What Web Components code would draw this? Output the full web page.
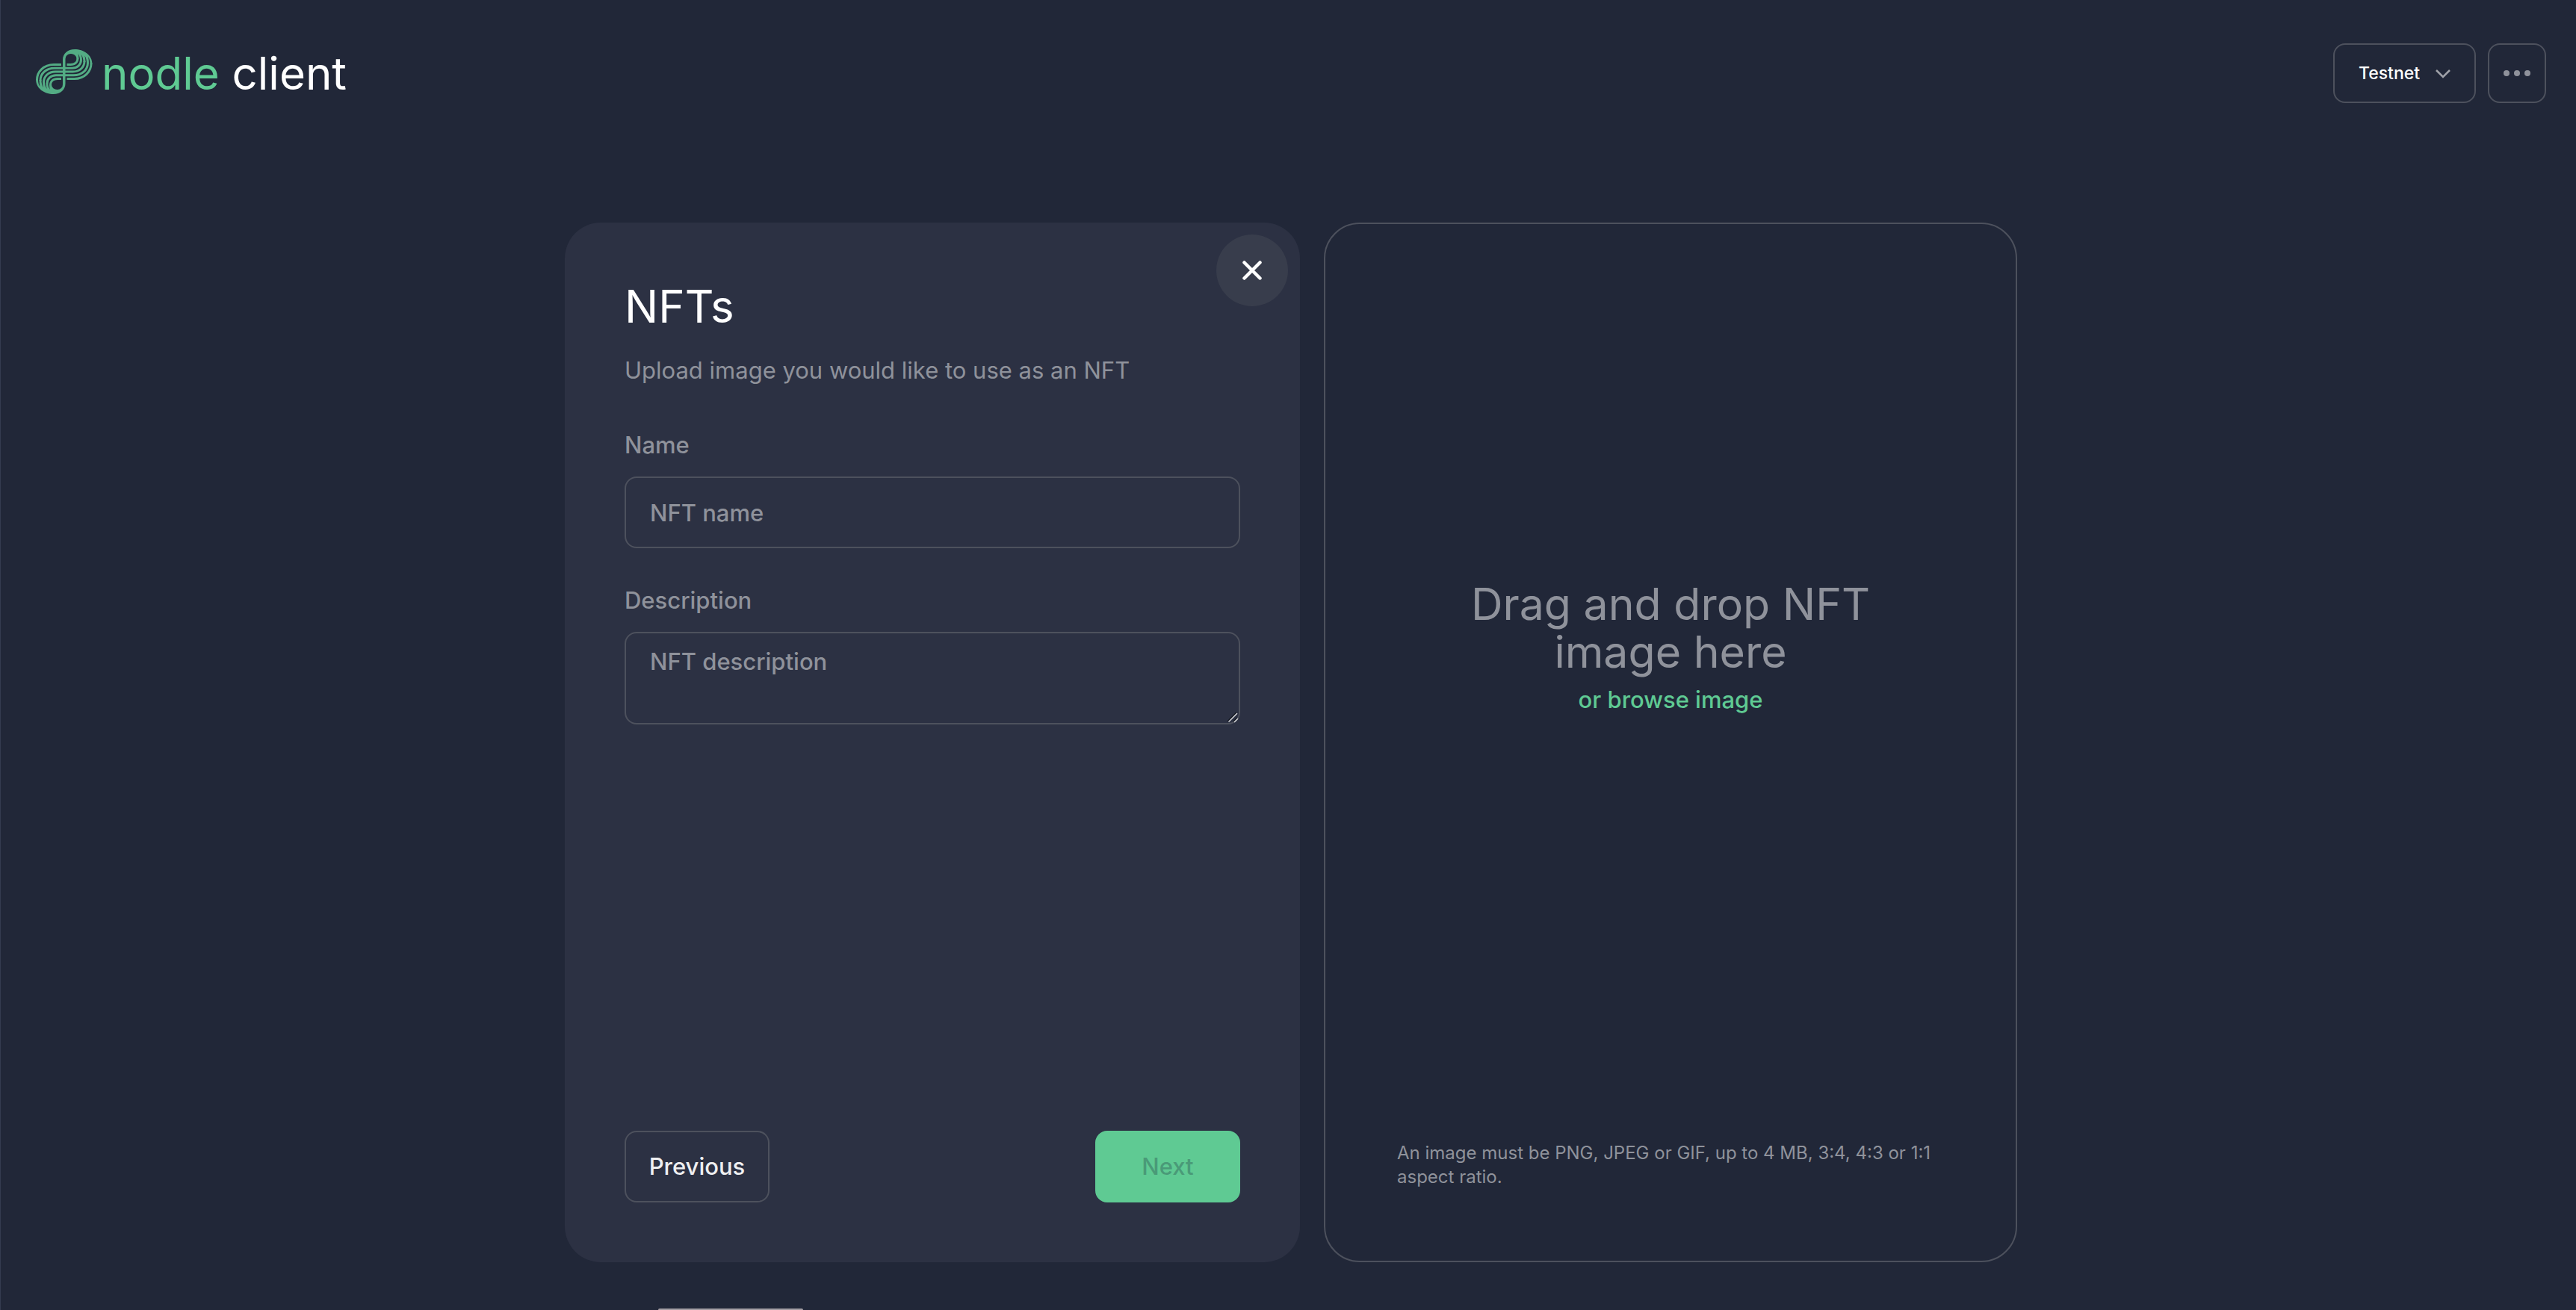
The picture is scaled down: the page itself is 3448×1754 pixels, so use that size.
<!DOCTYPE html>
<html lang="en">
<head>
<meta charset="utf-8">
<title>Nodle client</title>
<style>
  :root {
    --bg: #212738;
    --panel: #2c3143;
    --line: #4d515d;
    --muted: #8f929b;
    --green: #5fca93;
    --logo: #53ac84;
    --title: 60px;
  }
  body {
    margin: 0;
    min-height: 100vh;
    box-sizing: border-box;
    border-left: 1px solid #343b50;
    background: var(--bg);
    color: #fff;
    font: 400 31px/40px Inter, "Liberation Sans", sans-serif;
  }
</style>
</head>
<body>
<nft-app></nft-app>

<script>
const define = (name, html, setup) => {
  const template = document.createElement("template");
  template.innerHTML = html;
  customElements.define(name, class extends HTMLElement {
    constructor() {
      super();
      this.attachShadow({ mode: "open" }).append(template.content.cloneNode(true));
    }
    connectedCallback() { if (setup) setup(this, this.shadowRoot); }
  });
};

define("nodle-logo", `
<style>
  :host { display: flex; align-items: center; gap: 12px; font-size: var(--title); line-height: 64px; }
  svg { width: 76px; height: 60px; padding-bottom: 4px; }
  span { color: var(--green); }
</style>
<svg viewBox="0 0 76 60" aria-hidden="true">
  <defs>
    <g id="lobe">
      <path fill="none" stroke="var(--logo)" stroke-width="3" d="M34 20.500H24C10.500 20.500 1.500 30 1.500 41M38 25.250H25C14 25.250 6 32 6 42M38 30H26C17 30 10.500 36 10.500 44M38 34.750H27C20 34.750 15 39.500 15 46M34 39.500H29C23 39.500 19.500 43 19.500 48"/>
      <path fill="var(--logo)" d="M0 40H3C3 44 3.600 47 5.500 50C4.700 47 4.500 44 4.500 41H7.500C7.500 45 8.200 48.500 10.200 51.500C9.300 49 9 46 9 43H12C12 47 12.800 50 14.800 53C13.900 50.500 13.500 48 13.500 45.500H16.500C16.500 49 17.200 51.500 19 54C18.300 52 18 50 18 47.500H21A7.500 6.800 0 1 0 36 47V30H39.500V46C39.500 54 33 60 23.500 60C12 60 0 53 0 40Z"/>
    </g>
  </defs>
  <use href="#lobe"/><use href="#lobe" transform="rotate(180 37.750 30)"/>
</svg>
<div><span>nodle</span> client</div>`);

define("network-select", `
<style>
  :host { display: grid; align-items: center; }
  select, svg { grid-area: 1 / 1; }
  select {
    appearance: none; height: 80px; width: 191px; padding: 0 32px; box-sizing: border-box;
    border: 2px solid var(--line); border-radius: 16px; background: none;
    color: #fff; font: 500 23px/32px Inter, "Liberation Sans", sans-serif;
  }
  svg { justify-self: end; width: 22px; height: 14px; margin: 2px 33px 0 0; pointer-events: none; }
</style>
<select aria-label="Network"><option>Testnet</option></select>
<svg viewBox="0 0 22 14" fill="none" stroke="#a0a2a9" stroke-width="2.500"><path d="M2 2l9 9 9-9"/></svg>`);

define("more-button", `
<style>
  :host { display: block; }
  button { display: grid; place-items: center; width: 78px; height: 80px; padding: 0; border: 2px solid var(--line); border-radius: 16px; background: none; }
  svg { width: 36px; height: 8px; }
</style>
<button aria-label="More"><svg viewBox="0 0 36 8" fill="#8f929b"><circle cx="4" cy="4" r="4"/><circle cx="18" cy="4" r="4"/><circle cx="32" cy="4" r="4"/></svg></button>`);

define("app-header", `
<style>
  :host { display: flex; align-items: center; justify-content: space-between; padding: 58px 40px 0 47px; }
  nav { display: flex; gap: 16px; }
</style>
<nodle-logo></nodle-logo>
<nav><network-select></network-select><more-button></more-button></nav>`);

define("form-field", `
<style>
  :host { display: flex; flex-direction: column; gap: 22px; font-weight: 500; }
  label { color: var(--muted); }
  .box { display: grid; }
  input, textarea {
    grid-area: 1 / 1; width: 100%; box-sizing: border-box; margin: 0;
    border: 2px solid var(--line); border-radius: 16px; background: none;
    color: #fff; font: inherit; outline: 0;
  }
  input { height: 96px; padding: 0 32px; }
  textarea { padding: 18px 32px 22px; }
  textarea::-webkit-resizer { background: transparent; }
  ::placeholder { color: var(--muted); opacity: 1; }
  svg { grid-area: 1 / 1; place-self: end; width: 16px; height: 16px; margin: 0 2px 2px 0; pointer-events: none; }
  :host(:not([multiline])) svg { display: none; }
</style>
<label for="control"></label>
<div class="box"><svg viewBox="0 0 16 16" fill="none" stroke-width="1.500"><path stroke="#10131c" d="M1.500 13.500L13 2M9 14L14 9"/><path stroke="#d4d5d8" d="M2.500 14.500L14 3M10 15L15 10"/></svg></div>`, (host, root) => {
  if (root.querySelector("#control")) return;
  root.querySelector("label").textContent = host.getAttribute("label");
  const multi = host.hasAttribute("multiline");
  const control = document.createElement(multi ? "textarea" : "input");
  control.id = "control";
  if (multi) control.rows = 2;
  control.placeholder = host.getAttribute("placeholder");
  root.querySelector(".box").prepend(control);
});

define("action-button", `
<style>
  :host { display: block; }
  button {
    min-width: 194px; height: 96px; padding: 0 30px; box-sizing: border-box;
    border: 2px solid var(--line); border-radius: 16px; background: none;
    color: #efeff1; font: 500 31px/40px Inter, "Liberation Sans", sans-serif;
  }
  :host([primary]) button { border-color: var(--green); background: var(--green); color: #4a9a78; }
</style>
<button><slot></slot></button>`, (host, root) => {
  root.querySelector("button").disabled = host.hasAttribute("disabled");
});

define("nft-form", `
<style>
  :host { position: relative; display: flex; flex-direction: column; padding: 80px; border-radius: 48px; background: var(--panel); }
  h1 { margin: 0 0 34px; font-size: var(--title); font-weight: 400; line-height: 64px; }
  p { margin: 0 0 60px; color: var(--muted); }
  .fields { display: flex; flex-direction: column; gap: 50px; }
  footer { display: flex; justify-content: space-between; margin-top: auto; }
  .close { position: absolute; top: 16px; right: 16px; display: grid; place-items: center; width: 96px; height: 96px; padding: 0; border: 0; border-radius: 50%; background: #383d4c; }
  svg { width: 26px; height: 26px; }
</style>
<button class="close" aria-label="Close"><svg viewBox="0 0 26 26" stroke="#fff" stroke-width="4.500" stroke-linecap="round"><path d="M2.500 2.500l21 21M23.500 2.500l-21 21"/></svg></button>
<h1>NFTs</h1>
<p>Upload image you would like to use as an NFT</p>
<div class="fields">
  <form-field label="Name" placeholder="NFT name"></form-field>
  <form-field label="Description" placeholder="NFT description" multiline></form-field>
</div>
<footer>
  <action-button>Previous</action-button>
  <action-button primary disabled>Next</action-button>
</footer>`);

define("drop-zone", `
<style>
  :host { display: flex; flex-direction: column; box-sizing: border-box; padding: 96px; border: 2px solid var(--line); border-radius: 48px; }
  :host::before { content: ""; flex: 15; }
  .prompt { padding: 0 92px; text-align: center; }
  h2 { margin: 0; color: var(--muted); font-size: 59px; font-weight: 400; line-height: 64px; }
  button { padding: 0; border: 0; background: none; color: var(--green); font: 500 31px/64px Inter, "Liberation Sans", sans-serif; }
  .gap { flex: 22; }
  p { margin: 0; color: var(--muted); font-size: 24px; line-height: 32px; }
</style>
<div class="prompt"><h2>Drag and drop NFT image here</h2><button>or browse image</button></div>
<div class="gap"></div>
<p>An image must be PNG, JPEG or GIF, up to 4 MB, 3:4, 4:3 or 1:1 aspect ratio.</p>`);

define("nft-app", `
<style>
  :host { display: block; }
  main {
    display: grid; grid-template-columns: 984fr 928fr; gap: 32px;
    max-width: 1944px; min-height: 1392px; margin: 160px auto 0; padding: 0 0 0 7px;
  }
  .peek { position: fixed; bottom: 0; left: 881px; width: 194px; height: 2px; border-radius: 4px 4px 0 0; background: #a49fa5; }
</style>
<app-header></app-header>
<main><nft-form></nft-form><drop-zone></drop-zone></main>
<div class="peek"></div>`);
</script>
</body>
</html>
